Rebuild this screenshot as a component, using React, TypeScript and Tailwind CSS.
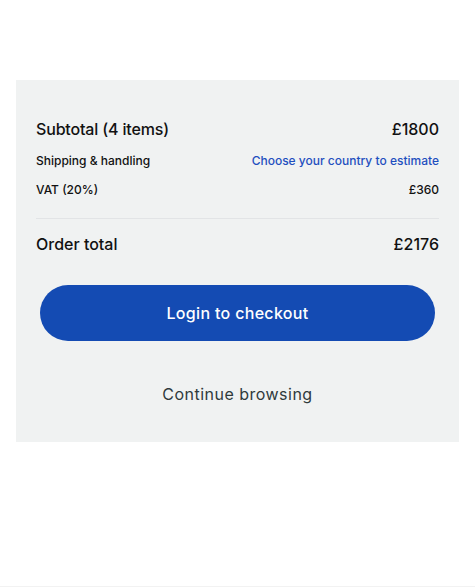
import React from "react";

export default function App() {
  return (
    <div className="w-[475px] h-[587px] bg-white relative" style={{ fontFamily: "Inter, 'Noto Sans', sans-serif" }}>
      <div className="h-[80px]" />
      <div className="mx-4 bg-[#f0f2f2] px-5 pt-[39px] h-[362px] text-[#111]">
        <div className="flex items-center justify-between h-5">
          <span className="text-[16px] font-medium tracking-[-0.01em]">Subtotal (4 items)</span>
          <span className="text-[16px] font-medium">£1800</span>
        </div>
        <div className="flex items-center justify-between h-4 mt-[14px]">
          <span className="text-[12px] font-medium">Shipping &amp; handling</span>
          <span className="text-[12px] font-medium text-[#1f4fbf]">Choose your country to estimate</span>
        </div>
        <div className="flex items-center justify-between h-4 mt-[13px]">
          <span className="text-[12px] font-medium">VAT (20%)</span>
          <span className="text-[12px] font-medium">£360</span>
        </div>
        <div className="h-px bg-[#e2e4e6] mt-[20px]" />
        <div className="flex items-center justify-between h-5 mt-[15px]">
          <span className="text-[16px] font-medium">Order total</span>
          <span className="text-[16px] font-medium">£2176</span>
        </div>
        <button className="mx-1 mt-[31px] w-[395px] h-[56px] rounded-full bg-[#144bb3] text-white text-[16px] font-medium tracking-[0.02em]">
          Login to checkout
        </button>
        <div className="text-center mt-[41px] h-6 leading-6 text-[16px] font-normal text-[#2f3a3c] tracking-[0.03em]">
          Continue browsing
        </div>
      </div>
      <div className="absolute bottom-0 left-0 right-0 h-px bg-[#f2f2f2]" />
    </div>
  );
}
